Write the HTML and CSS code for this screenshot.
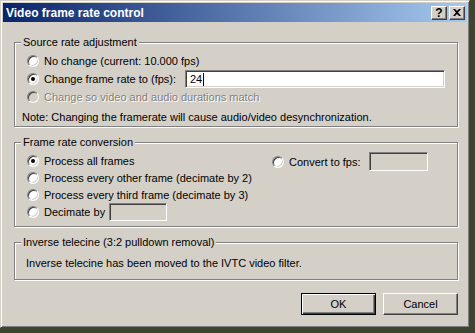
FILE: index.html
```html
<!DOCTYPE html>
<html lang="en">
<head>
    <meta charset="UTF-8">
    <title>Video frame rate control</title>
    <link rel="stylesheet" href="styles.css">
</head>
<body>
    <div class="dialog">
        <div class="titlebar">
            <span class="title">Video frame rate control</span>
            <div class="caption-buttons">
                <span class="cap-btn">?</span>
                <span class="cap-btn">
                    <svg width="8" height="7" viewBox="0 0 8 7"><path d="M0 0h2l2 2 2-2h2L5 3.5 8 7H6L4 5 2 7H0l3-3.5z" fill="#000"/></svg>
                </span>
            </div>
        </div>

        <!-- source rate -->
        <fieldset class="group group-source">
            <legend>Source rate adjustment</legend>
            <div class="row"><span class="radio"></span><span>No change (current: 10.000 fps)</span></div>
            <div class="row">
                <span class="radio checked"></span>
                <span class="label label-fps">Change frame rate to (fps):</span>
                <span class="textbox textbox-fps">24<span class="caret"></span></span>
            </div>
            <div class="row disabled"><span class="radio"></span><span>Change so video and audio durations match</span></div>
            <p class="note">Note: Changing the framerate will cause audio/video desynchronization.</p>
        </fieldset>

        <!-- conversion -->
        <fieldset class="group group-convert">
            <legend>Frame rate conversion</legend>
            <div class="columns">
                <div class="col-left">
                    <div class="row row-tight"><span class="radio checked"></span><span>Process all frames</span></div>
                    <div class="row row-tight"><span class="radio"></span><span>Process every other frame (decimate by 2)</span></div>
                    <div class="row row-tight"><span class="radio"></span><span>Process every third frame (decimate by 3)</span></div>
                    <div class="row row-tight">
                        <span class="radio"></span>
                        <span class="label label-decimate">Decimate by</span>
                        <span class="textbox textbox-off textbox-decimate"></span>
                    </div>
                </div>
                <div class="col-right">
                    <div class="row row-convert">
                        <span class="radio"></span>
                        <span class="label label-convert">Convert to fps:</span>
                        <span class="textbox textbox-off textbox-convert"></span>
                    </div>
                </div>
            </div>
        </fieldset>

        <!-- ivtc -->
        <fieldset class="group group-ivtc">
            <legend>Inverse telecine (3:2 pulldown removal)</legend>
            <p class="info">Inverse telecine has been moved to the IVTC video filter.</p>
        </fieldset>

        <div class="buttons">
            <button class="btn btn-default">OK</button>
            <button class="btn">Cancel</button>
        </div>
    </div>
</body>
</html>
```

FILE: styles.css
```css
body {
    margin: 0;
    background-color: #3b4630;
    font-family: "Liberation Sans", Arial, sans-serif;
    font-size: 11px;
    color: #000;
}

.dialog {
    width: 470px;
    height: 328px;
    box-sizing: border-box;
    background-color: #d4d0c8;
    border: 1px solid;
    border-color: #d4d0c8 #404040 #404040 #d4d0c8;
    box-shadow: inset 1px 1px 0 #fff, inset -1px -1px 0 #808080;
    padding: 2px;
}

.titlebar {
    height: 19px;
    background: linear-gradient(to right, #0a246a, #a6caf0);
    display: flex;
    align-items: center;
    justify-content: space-between;
    padding: 0 2px 0 3px;
}

.title {
    color: white;
    font-weight: bold;
    font-size: 12px;
}

.caption-buttons {
    display: flex;
    gap: 2px;
}

.cap-btn {
    width: 16px;
    height: 14px;
    box-sizing: border-box;
    background-color: #d4d0c8;
    border: 1px solid;
    border-color: #fff #404040 #404040 #fff;
    box-shadow: inset -1px -1px 0 #808080;
    display: flex;
    align-items: center;
    justify-content: center;
    font-weight: bold;
    font-size: 12px;
    line-height: 12px;
}

/* group boxes */
.group {
    margin: 9px 0 0 11px;
    width: 444px;
    box-sizing: border-box;
    min-width: 0;
    padding: 3px 12px 0 12px;
    border: 1px solid #808080;
    box-shadow: 1px 1px 0 #fff, inset 1px 1px 0 #fff;
}

.group legend {
    margin-left: -6px;
    padding: 0 2px;
    line-height: 13px;
    background-color: #d4d0c8;
}

.group-source {
    margin-top: 14px;
}

.group-convert {
    padding-bottom: 6px;
}

.group-ivtc {
    padding: 5px 12px 7px 11px;
}

.group-ivtc legend {
    margin-left: -5px;
}

.row {
    display: flex;
    align-items: center;
    height: 18px;
}

.row-tight {
    height: 17px;
}

.row.disabled {
    color: #808080;
    text-shadow: 1px 1px 0 #fff;
}

.radio {
    width: 12px;
    height: 12px;
    box-sizing: border-box;
    border-radius: 50%;
    border: 1px solid;
    border-color: #808080 #fff #fff #808080;
    box-shadow: inset 1px 1px 0 #404040, inset -1px -1px 0 #d4d0c8;
    background-color: white;
    margin-right: 5px;
    display: flex;
    align-items: center;
    justify-content: center;
    flex-shrink: 0;
}

.radio.checked::after {
    content: "";
    width: 4px;
    height: 4px;
    border-radius: 50%;
    background-color: #000;
}

.row.disabled .radio {
    background-color: #d4d0c8;
}

.label {
    flex-shrink: 0;
}

.label-fps {
    width: 141px;
}

.label-decimate {
    width: 65px;
}

.label-convert {
    width: 80px;
}

.textbox {
    box-sizing: border-box;
    height: 18px;
    border: 1px solid;
    border-color: #808080 #fff #fff #808080;
    box-shadow: inset 1px 1px 0 #404040, inset -1px -1px 0 #d4d0c8;
    background-color: white;
    padding: 0 0 0 4px;
    display: flex;
    align-items: center;
}

.textbox-off {
    background-color: #d4d0c8;
}

.textbox-fps {
    width: 262px;
}

.textbox-decimate {
    width: 58px;
}

.textbox-convert {
    width: 59px;
    height: 19px;
}

.caret {
    width: 1px;
    height: 13px;
    background-color: #000;
    margin-left: 1px;
}

.note {
    margin: 2px 0 0 -5px;
    line-height: 18px;
}

.info {
    margin: 0;
    line-height: 18px;
}

.columns {
    display: flex;
}

.col-left {
    width: 245px;
}

.row-convert {
    height: 19px;
}

/* buttons */
.buttons {
    display: flex;
    justify-content: flex-end;
    gap: 7px;
    width: 444px;
    margin: 13px 0 0 11px;
}

.btn {
    width: 75px;
    height: 22px;
    box-sizing: border-box;
    font-family: inherit;
    font-size: 11px;
    color: #000;
    background-color: #d4d0c8;
    border: 1px solid;
    border-color: #fff #404040 #404040 #fff;
    box-shadow: inset -1px -1px 0 #808080;
    padding: 0;
}

.btn-default {
    border: 1px solid #000;
    box-shadow: inset 1px 1px 0 #fff, inset -1px -1px 0 #404040, inset -2px -2px 0 #808080;
}
```
